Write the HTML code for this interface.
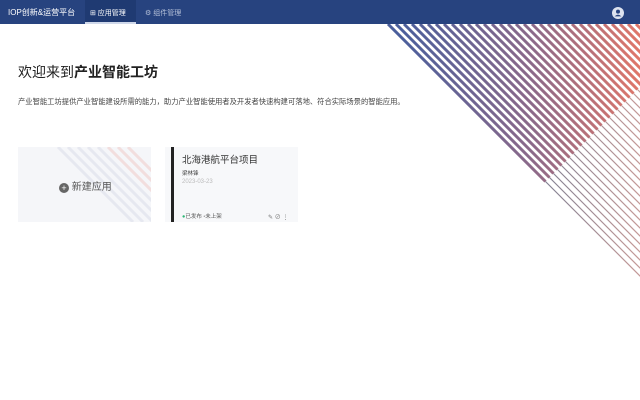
<!DOCTYPE html>
<html><head><meta charset="utf-8"><style>
*{margin:0;padding:0;box-sizing:border-box}
body{width:640px;height:400px;overflow:hidden;background:#fff;position:relative;font-family:"Liberation Sans","Noto Sans CJK SC",sans-serif;color:#333}
.hdr{position:absolute;left:0;top:0;width:640px;height:24px;background:#27437f;color:#fff}
.abs{position:absolute;white-space:nowrap}
</style></head><body>
<svg class="abs" style="left:0;top:0" width="640" height="400">
<defs>
<linearGradient id="g" gradientUnits="userSpaceOnUse" x1="400" y1="0" x2="640" y2="0"><stop offset="0" stop-color="#4b5f9c"/><stop offset="0.55" stop-color="#8c6a8a"/><stop offset="1" stop-color="#e0776a"/></linearGradient>
<linearGradient id="g2" gradientUnits="userSpaceOnUse" x1="540" y1="0" x2="640" y2="0"><stop offset="0" stop-color="#7e7f92"/><stop offset="1" stop-color="#c59a98"/></linearGradient>
</defs>
<g stroke="url(#g)" stroke-width="3" fill="none">
<path d="M388 24L545.5 181.5M396 24L549.5 177.5M404 24L553.5 173.5M412 24L557.5 169.5M420 24L561.5 165.5M428 24L565.5 161.5M436 24L569.5 157.5M444 24L573.5 153.5M452 24L577.5 149.5M460 24L581.5 145.5M468 24L585.5 141.5M476 24L589.5 137.5M484 24L593.5 133.5M492 24L597.5 129.5M500 24L601.5 125.5M508 24L605.5 121.5M516 24L609.5 117.5M524 24L613.5 113.5M532 24L617.5 109.5M540 24L621.5 105.5M548 24L625.5 101.5M556 24L629.5 97.5M564 24L633.5 93.5M572 24L637.5 89.5M580 24L641.5 85.5M588 24L690 126M596 24L700 128M604 24L710 130M612 24L720 132M620 24L730 134M628 24L740 136M636 24L750 138"/>
</g>
<g stroke="url(#g2)" stroke-width="1.2" fill="none">
<path d="M545.5 181.5L764 400M549.5 177.5L772 400M553.5 173.5L780 400M557.5 169.5L788 400M561.5 165.5L796 400M565.5 161.5L804 400M569.5 157.5L812 400M573.5 153.5L820 400M577.5 149.5L828 400M581.5 145.5L836 400M585.5 141.5L844 400M589.5 137.5L852 400M593.5 133.5L860 400M597.5 129.5L868 400M601.5 125.5L876 400M605.5 121.5L884 400M609.5 117.5L892 400M613.5 113.5L900 400M617.5 109.5L908 400M621.5 105.5L916 400M625.5 101.5L924 400M629.5 97.5L932 400M633.5 93.5L940 400M637.5 89.5L948 400"/>
</g>
</svg>
<div class="hdr">
<div class="abs" style="left:8px;top:7px;font-size:8px">IOP创新&amp;运营平台</div>
<div class="abs" style="left:85px;top:0;width:51px;height:24px;background:#1f3a72;border-bottom:2px solid #cfd8ea"></div>
<div class="abs" style="left:90px;top:8px;font-size:7px">⊞ 应用管理</div>
<div class="abs" style="left:145px;top:8px;font-size:7px;color:#b5c0d8">⚙ 组件管理</div>
<svg class="abs" style="left:612px;top:7px" width="12" height="12"><circle cx="6" cy="6" r="6" fill="#dde3ef"/><circle cx="6" cy="4.6" r="2" fill="#27437f"/><path d="M2.6 9.4Q6 5.8 9.4 9.4" fill="#27437f"/></svg>
</div>
<div class="abs" style="left:18px;top:62px;font-size:14px;color:#222">欢迎来到<b>产业智能工坊</b></div>
<div class="abs" style="left:18px;top:97px;font-size:7.3px;color:#444">产业智能工坊提供产业智能建设所需的能力，助力产业智能使用者及开发者快速构建可落地、符合实际场景的智能应用。</div>
<div class="abs" style="left:18px;top:147px;width:133px;height:75px;background:#f5f6f9;overflow:hidden">
<svg class="abs" style="left:0;top:0" width="133" height="75"><g stroke="#e6e8f0" stroke-width="3"><path d="M40 0L115 75M50 0L125 75M60 0L135 75M70 0L145 75M80 0L155 75"/></g><g stroke="#f2dede" stroke-width="3"><path d="M90 0L165 75M100 0L175 75M110 0L185 75"/></g></svg>
<div class="abs" style="left:41px;top:31px;font-size:10px;color:#555"><span style="display:inline-block;width:10px;height:10px;border-radius:5px;background:#666;color:#fff;font-size:9px;line-height:10px;text-align:center;vertical-align:-1px">+</span> 新建应用</div>
</div>
<div class="abs" style="left:165px;top:147px;width:133px;height:75px;background:#f7f8fa">
<div class="abs" style="left:6px;top:0;width:3px;height:75px;background:#222"></div>
<div class="abs" style="left:17px;top:5px;font-size:9.5px;color:#333">北海港航平台项目</div>
<div class="abs" style="left:17px;top:22px;font-size:5.5px;color:#444">梁林锋</div>
<div class="abs" style="left:17px;top:32px;font-size:6px;color:#bbb">2023-03-23</div>
<div class="abs" style="left:17px;top:65px;font-size:5.5px;color:#555"><span style="color:#2bb673">●</span>已发布 <span style="color:#999">•</span>未上架</div>
<div class="abs" style="left:103px;top:65px;font-size:6px;color:#777">✎ ⊘ ⋮</div>
</div>
</body></html>
